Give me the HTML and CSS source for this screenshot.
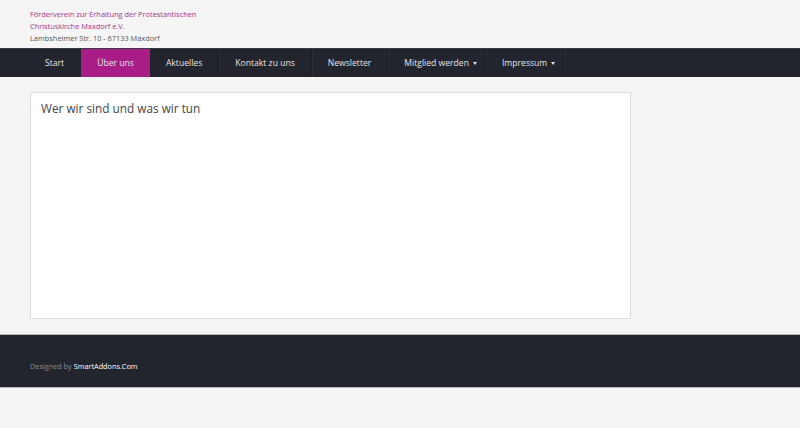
FILE: index.html
```html
<!DOCTYPE html>
<html lang="de">
<head>
    <meta charset="UTF-8">
    <meta name="viewport" content="width=device-width, initial-scale=1.0">
    <title>Über uns</title>
    <link rel="stylesheet" href="styles.css">
</head>
<body>
    <!-- Header -->
    <div class="header">
        <p class="brand">Förderverein zur Erhaltung der Protestantischen<br>Christuskirche Maxdorf e.V.</p>
        <p class="address">Lambsheimer Str. 10 - 67133 Maxdorf</p>
    </div>

    <!-- Menu -->
    <div class="menu">
        <ul class="menu-list">
            <li class="menu-item"><a href="#">Start</a></li>
            <li class="menu-item active"><a href="#">Über uns</a></li>
            <li class="menu-item"><a href="#">Aktuelles</a></li>
            <li class="menu-item"><a href="#">Kontakt zu uns</a></li>
            <li class="menu-item"><a href="#">Newsletter</a></li>
            <li class="menu-item dropdown"><a href="#">Mitglied werden<span class="caret"></span></a></li>
            <li class="menu-item dropdown"><a href="#">Impressum<span class="caret"></span></a></li>
        </ul>
    </div>

    <!-- Content -->
    <div class="main">
        <div class="article">
            <h2>Wer wir sind und was wir tun</h2>
        </div>
    </div>

    <!-- Footer -->
    <div class="footer">
        <p class="credit">Designed by <a href="#">SmartAddons.Com</a></p>
    </div>
</body>
</html>
```
FILE: styles.css
```css
body {
    font-family: "Open Sans", Arial, sans-serif;
    background-color: #f5f5f5;
    color: #444;
    margin: 0;
    padding: 0;
}
a {
    text-decoration: none;
}
.header {
    padding: 8px 30px 4px;
    font-size: 7.4px;
    line-height: 12px;
}
.header p {
    margin: 0;
}
.brand {
    color: #a8338f;
}
.address {
    color: #555;
}
.menu {
    background: #23252e;
    border-top: 1px solid #3a3c44;
    height: 28px;
}
.menu-list {
    list-style: none;
    margin: 0;
    padding: 0 0 0 30px;
    display: flex;
    height: 28px;
}
.menu-item {
    border-right: 1px solid #1b1d24;
    box-shadow: 1px 0 0 #2c2f38;
}
.menu-item:first-child,
.menu-item.active {
    border-right: none;
    box-shadow: none;
}
.menu-item a {
    display: flex;
    align-items: center;
    height: 28px;
    padding: 0 16px;
    font-size: 8.6px;
    color: #e4e4e8;
}
.menu-item:first-child a {
    padding: 0 17px 0 15px;
}
.menu-item.dropdown a {
    padding: 0 8px 0 16px;
}
.menu-item.active {
    background: #a81d87;
}
.caret {
    display: inline-block;
    width: 0;
    height: 0;
    margin-left: 4px;
    border-top: 3px solid #e4e4e8;
    border-left: 2.5px solid transparent;
    border-right: 2.5px solid transparent;
}
.main {
    padding: 15px 30px 15px;
}
.article {
    width: 599px;
    height: 225px;
    background: #fff;
    border: 1px solid #dedede;
}
.article h2 {
    margin: 0;
    padding: 7px 10px;
    font-size: 11.8px;
    font-weight: normal;
    color: #444;
}
.footer {
    background: #23252e;
    border-top: 1px solid #b8b8c0;
    border-bottom: 1px solid #b8b8c0;
    height: 52px;
    display: flex;
    align-items: center;
    padding: 0 30px;
}
.credit {
    margin: 10px 0 0;
    font-size: 7.3px;
    color: #8a8c92;
}
.credit a {
    color: #fff;
}
```
